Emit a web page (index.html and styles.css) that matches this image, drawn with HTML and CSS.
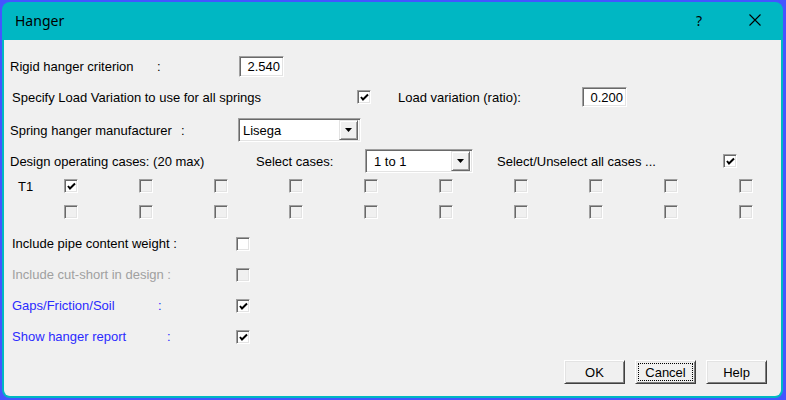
FILE: index.html
```html
<!DOCTYPE html>
<html>
<head>
<meta charset="utf-8">
<link rel="stylesheet" href="styles.css">
</head>
<body>
<div class="window">
  <div class="titlebar">
    <span class="title">Hanger</span>
    <span class="help-q">?</span>
    <svg class="close" width="12" height="12" viewBox="0 0 12 12"><path d="M0.5 0.5 L11.5 11.5 M11.5 0.5 L0.5 11.5" stroke="#000" stroke-width="1.1" fill="none"/></svg>
  </div>
  <div class="client">
    <div class="row r1">
      <span class="w147">Rigid hanger criterion</span>
      <span class="w82">:</span>
      <div class="edit w45">2.540</div>
    </div>
    <div class="row r2">
      <span class="w345">Specify Load Variation to use for all springs</span>
      <span class="cb on"><svg width="9" height="9" viewBox="0 0 9 9"><path d="M1 4 L3 6.5 L8 1.5" stroke="#000" stroke-width="2" fill="none"/></svg></span>
      <span class="w184 ml27">Load variation (ratio):</span>
      <div class="edit w45 h20">0.200</div>
    </div>
    <div class="row r3">
      <span class="w171">Spring hanger manufacturer</span>
      <span class="w57">:</span>
      <div class="combo w123"><span class="ctext">Lisega</span><span class="dd"><svg width="7" height="4" viewBox="0 0 7 4"><path d="M0 0 H7 L3.5 4 Z" fill="#000"/></svg></span></div>
    </div>
    <div class="row r4">
      <span class="w246">Design operating cases: (20 max)</span>
      <span class="w109">Select cases:</span>
      <div class="combo w108"><span class="ctext pl5">1 to 1</span><span class="dd"><svg width="7" height="4" viewBox="0 0 7 4"><path d="M0 0 H7 L3.5 4 Z" fill="#000"/></svg></span></div>
      <span class="w226 ml24">Select/Unselect all cases ...</span>
      <span class="cb on"><svg width="9" height="9" viewBox="0 0 9 9"><path d="M1 4 L3 6.5 L8 1.5" stroke="#000" stroke-width="2" fill="none"/></svg></span>
    </div>
    <div class="row r5 grid">
      <span class="t1">T1</span>
      <span class="cb on"><svg width="9" height="9" viewBox="0 0 9 9"><path d="M1 4 L3 6.5 L8 1.5" stroke="#000" stroke-width="2" fill="none"/></svg></span>
      <span class="cb dis"></span><span class="cb dis"></span><span class="cb dis"></span><span class="cb dis"></span>
      <span class="cb dis"></span><span class="cb dis"></span><span class="cb dis"></span><span class="cb dis"></span><span class="cb dis"></span>
    </div>
    <div class="row r6 grid">
      <span class="t1"></span>
      <span class="cb dis"></span><span class="cb dis"></span><span class="cb dis"></span><span class="cb dis"></span><span class="cb dis"></span>
      <span class="cb dis"></span><span class="cb dis"></span><span class="cb dis"></span><span class="cb dis"></span><span class="cb dis"></span>
    </div>
    <div class="row r7 opt">
      <span class="w224">Include pipe content weight :</span>
      <span class="cb"></span>
    </div>
    <div class="row r8 opt">
      <span class="w224 grey">Include cut-short in design :</span>
      <span class="cb dis"></span>
    </div>
    <div class="row r8 opt">
      <span class="w146 blue">Gaps/Friction/Soil</span>
      <span class="w78 blue">:</span>
      <span class="cb on"><svg width="9" height="9" viewBox="0 0 9 9"><path d="M1 4 L3 6.5 L8 1.5" stroke="#000" stroke-width="2" fill="none"/></svg></span>
    </div>
    <div class="row r8 opt">
      <span class="w155 blue">Show hanger report</span>
      <span class="w69 blue">:</span>
      <span class="cb on"><svg width="9" height="9" viewBox="0 0 9 9"><path d="M1 4 L3 6.5 L8 1.5" stroke="#000" stroke-width="2" fill="none"/></svg></span>
    </div>
    <div class="buttons">
      <div class="btn">OK</div>
      <div class="btn focus"><span class="fr">Cancel</span></div>
      <div class="btn">Help</div>
    </div>
  </div>
</div>
</body>
</html>
```

FILE: styles.css
```css
html, body {
  margin: 0;
  padding: 0;
}
body {
  background: #4455ff;
  width: 786px;
  height: 400px;
  overflow: hidden;
  font-family: "Liberation Sans", Arial, sans-serif;
  font-size: 13px;
  color: #000;
}
.window {
  margin: 2px 0 0 2px;
  width: 781px;
  height: 396px;
  background: #00b7c3;
  border-radius: 8px;
  display: flex;
  flex-direction: column;
  overflow: hidden;
}
.titlebar {
  height: 38px;
  display: flex;
  align-items: center;
  padding-bottom: 2px;
  box-sizing: border-box;
  position: relative;
}
.title {
  font-family: "Noto Sans", "Open Sans", sans-serif;
  font-size: 14px;
  margin-left: 13px;
  color: #000;
  flex: 1;
}
.help-q {
  font-family: "Noto Sans", sans-serif;
  font-size: 14px;
  margin-right: 47px;
}
.close {
  margin-right: 22px;
}
.client {
  background: #f0f0f0;
  margin: 0 2px 2px 2px;
  flex: 1;
  border-radius: 0 0 6px 6px;
  padding-left: 6px;
  display: flex;
  flex-direction: column;
}
.row {
  display: flex;
  align-items: center;
  white-space: nowrap;
}
.row > * { flex: none; }
.row > span { display: inline-block; }
.r1 { height: 21px; margin-top: 16px; }
.r2 { height: 20px; margin-top: 10px; padding-left: 2px; }
.r3 { height: 24px; margin-top: 11px; }
.r4 { height: 24px; margin-top: 7px; }
.r5 { height: 14px; margin-top: 6px; }
.r6 { height: 14px; margin-top: 12px; }
.r7 { height: 15px; margin-top: 17px; }
.r8 { height: 15px; margin-top: 16px; }
.opt { padding-left: 2px; }

.w45 { width: 45px; }
.w57 { width: 57px; }
.w69 { width: 69px; }
.w78 { width: 78px; }
.w82 { width: 82px; }
.w108 { width: 108px; }
.w109 { width: 109px; }
.w123 { width: 123px; }
.w146 { width: 146px; }
.w147 { width: 147px; }
.w155 { width: 155px; }
.w171 { width: 171px; }
.w184 { width: 184px; }
.w224 { width: 224px; }
.w226 { width: 226px; }
.w246 { width: 246px; }
.w345 { width: 345px; }
.ml24 { margin-left: 24px; }
.ml27 { margin-left: 27px; }
.h20 { height: 20px !important; }

.grey { color: #a0a0a0; }
.blue { color: #2b2bff; }

.edit {
  height: 21px;
  box-sizing: border-box;
  background: #fff;
  border: 1px solid;
  border-color: #a0a0a0 #ffffff #ffffff #a0a0a0;
  box-shadow: inset 1px 1px 0 #696969, inset -1px -1px 0 #e3e3e3;
  text-align: right;
  padding: 0 3px 0 0;
  line-height: 19px;
}

.combo {
  height: 24px;
  box-sizing: border-box;
  background: #fff;
  border: 1px solid;
  border-color: #a0a0a0 #ffffff #ffffff #a0a0a0;
  box-shadow: inset 1px 1px 0 #696969, inset -1px -1px 0 #e3e3e3;
  display: flex;
  align-items: center;
  padding: 2px;
}
.ctext { flex: 1; padding-left: 2px; }
.pl5 { padding-left: 6px; }
.dd {
  width: 19px;
  height: 20px;
  box-sizing: border-box;
  background: #f0f0f0;
  border: 1px solid;
  border-color: #e3e3e3 #696969 #696969 #e3e3e3;
  box-shadow: inset 1px 1px 0 #fff, inset -1px -1px 0 #a0a0a0;
  display: flex;
  align-items: center;
  justify-content: center;
}
.dd svg { display: block; }

.cb {
  width: 14px;
  height: 14px;
  box-sizing: border-box;
  background: #fff;
  border: 1px solid;
  border-color: #a0a0a0 #ffffff #ffffff #a0a0a0;
  box-shadow: inset 1px 1px 0 #696969, inset -1px -1px 0 #e3e3e3;
  display: flex !important;
  align-items: center;
  justify-content: center;
  flex: none;
}
.cb svg { display: block; margin: 1px 0 0 1px; }
.cb.dis { background: #f0f0f0; }

.grid .t1 { width: 54px; padding-left: 8px; box-sizing: border-box; }
.grid .cb { margin-right: 61px; }

.buttons {
  display: flex;
  justify-content: flex-end;
  margin-top: 16px;
  padding-right: 14px;
  gap: 10px;
}
.btn {
  width: 61px;
  height: 24px;
  box-sizing: border-box;
  background: #f0f0f0;
  border: 1px solid;
  border-color: #ffffff #404040 #404040 #ffffff;
  box-shadow: inset 1px 1px 0 #e3e3e3, inset -1px -1px 0 #808080;
  display: flex;
  align-items: center;
  justify-content: center;
  font-family: "Liberation Sans", Arial, sans-serif;
  font-size: 13px;
}
.btn.focus { padding: 2px; }
.fr {
  flex: 1;
  align-self: stretch;
  border: 1px dotted #000;
  display: flex;
  align-items: center;
  justify-content: center;
}
```
